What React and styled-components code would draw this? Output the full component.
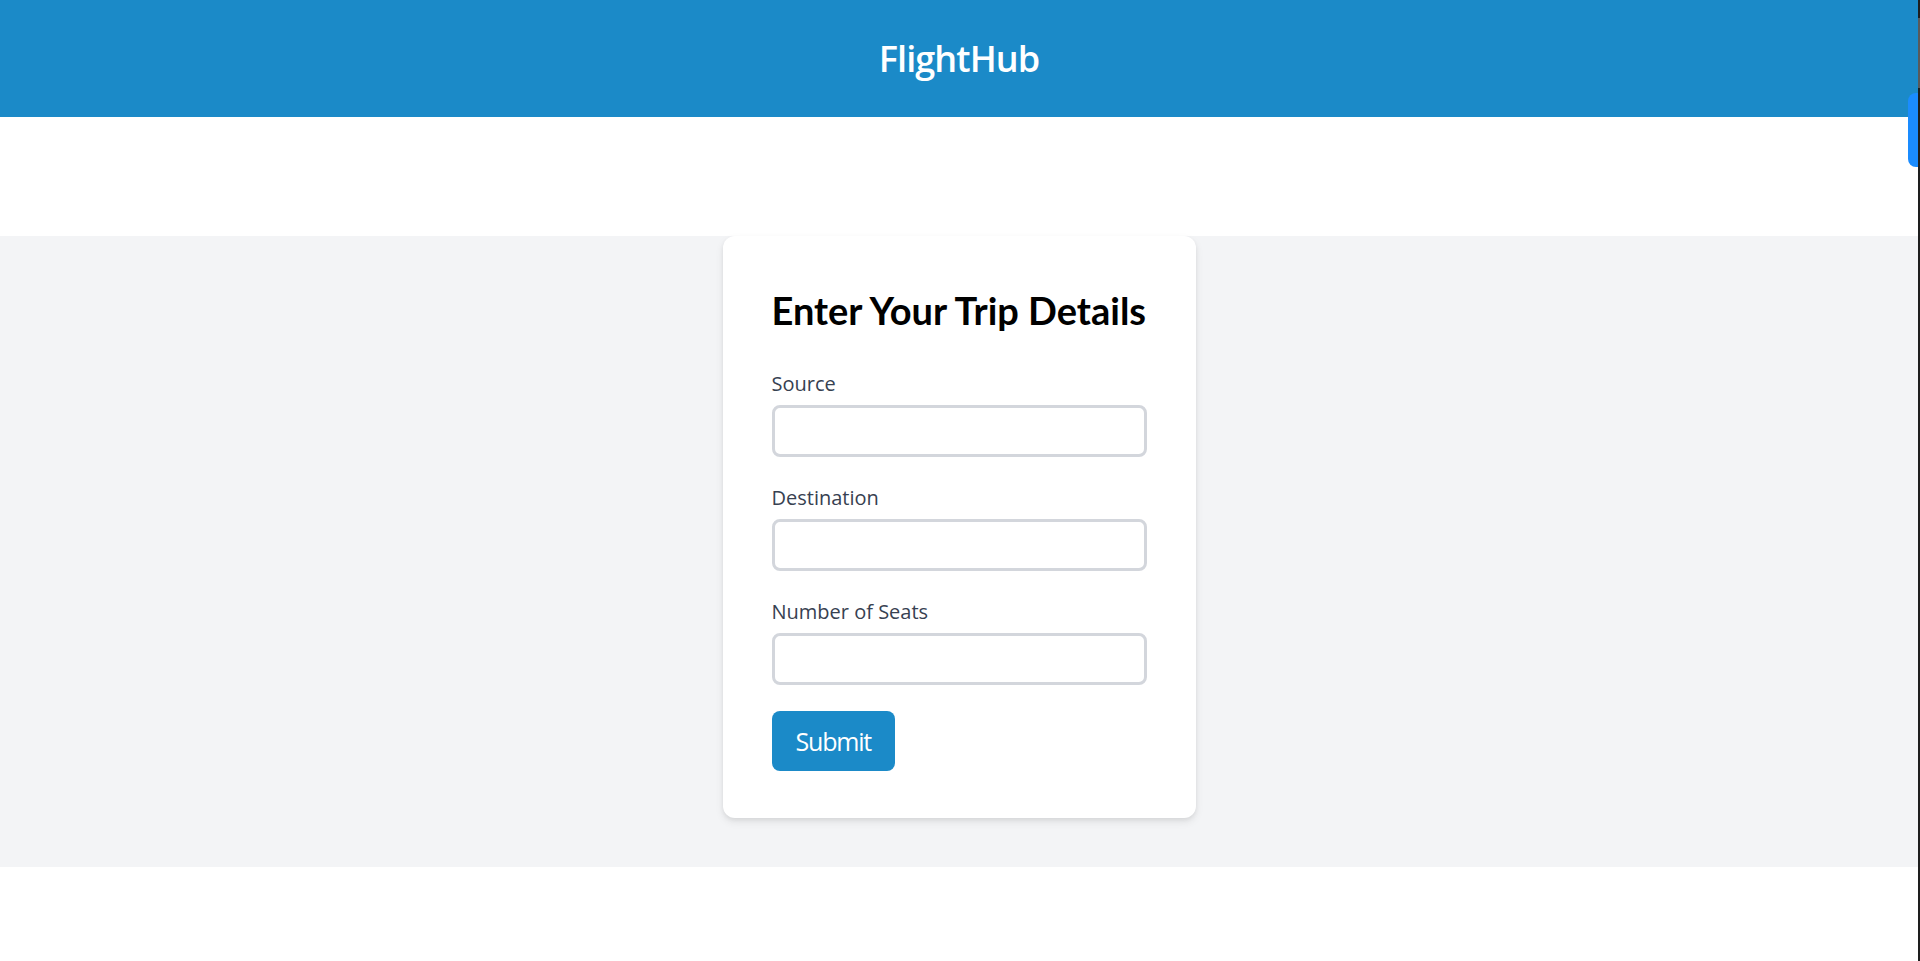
import React from "react";
import styled, { createGlobalStyle } from "styled-components";

const GlobalStyle = createGlobalStyle`
  html, body {
    margin: 0;
    padding: 0;
    background: #ffffff;
    font-family: "Open Sans", "Noto Sans", Arial, sans-serif;
  }
  * { box-sizing: border-box; }
`;

const Shell = styled.div`
  display: flex;
  min-height: 961px;
  position: relative;
`;

const Page = styled.div`
  flex: 1;
  display: flex;
  flex-direction: column;
  background: #ffffff;
`;

const EdgeBar = styled.div`
  width: 2px;
  background: #1e1e1e;
  display: flex;
  flex-direction: column;
`;

const EdgeThumb = styled.div`
  margin-top: 18px;
  height: 70px;
  background: #5a5a5a;
`;

const SideTab = styled.div`
  position: absolute;
  top: 93px;
  right: 2px;
  width: 10px;
  height: 74px;
  background: #1a8cff;
  border-radius: 8px 0 0 8px;
`;

const Header = styled.header`
  height: 117px;
  background: #1b8ac8;
  display: flex;
  align-items: center;
  justify-content: center;
`;

const Brand = styled.h1`
  margin: 0;
  color: #ffffff;
  font-size: 36px;
  line-height: 43px;
  font-weight: 600;
  letter-spacing: -0.9px;
`;

const Section = styled.main`
  margin-top: 119px;
  background: #f3f4f6;
  display: flex;
  justify-content: center;
  padding-bottom: 49px;
`;

const Card = styled.form`
  width: 473px;
  background: #ffffff;
  border-radius: 12px;
  box-shadow: 0 4px 8px rgba(0, 0, 0, 0.08), 0 2px 4px rgba(0, 0, 0, 0.06);
  padding: 51px 49px 47px;
  display: flex;
  flex-direction: column;
`;

const Title = styled.h2`
  margin: 0 0 37px;
  font-family: Lato, "Open Sans", sans-serif;
  font-size: 38px;
  line-height: 46px;
  font-weight: 700;
  color: #000000;
  white-space: nowrap;
`;

const Field = styled.div`
  display: flex;
  flex-direction: column;
  margin-bottom: 27px;
`;

const Label = styled.label`
  font-size: 20px;
  line-height: 28px;
  font-weight: 500;
  color: #374151;
  margin-bottom: 7px;
`;

const Input = styled.input`
  height: 52px;
  width: 100%;
  border: 3px solid #d3d6dc;
  border-radius: 8px;
  background: #ffffff;
  font-family: inherit;
  font-size: 20px;
  padding: 0 12px;
  outline: none;
`;

const Button = styled.button`
  align-self: flex-start;
  margin-top: -1px;
  height: 60px;
  padding: 0 24px;
  border: none;
  border-radius: 8px;
  background: #1b8ac8;
  color: #ffffff;
  font-family: inherit;
  font-size: 25px;
  line-height: 34px;
  letter-spacing: -1.2px;
  cursor: pointer;
`;

const fields = [
  { id: "source", label: "Source", type: "text" },
  { id: "destination", label: "Destination", type: "text" },
  { id: "seats", label: "Number of Seats", type: "number" },
];

export default function App() {
  return (
    <>
      <GlobalStyle />
      <Shell>
        <Page>
          <Header>
            <Brand>FlightHub</Brand>
          </Header>
          <Section>
            <Card onSubmit={(e) => e.preventDefault()}>
              <Title>Enter Your Trip Details</Title>
              {fields.map((f) => (
                <Field key={f.id}>
                  <Label htmlFor={f.id}>{f.label}</Label>
                  <Input id={f.id} type={f.type} />
                </Field>
              ))}
              <Button type="submit">Submit</Button>
            </Card>
          </Section>
        </Page>
        <EdgeBar>
          <EdgeThumb />
        </EdgeBar>
        <SideTab />
      </Shell>
    </>
  );
}
